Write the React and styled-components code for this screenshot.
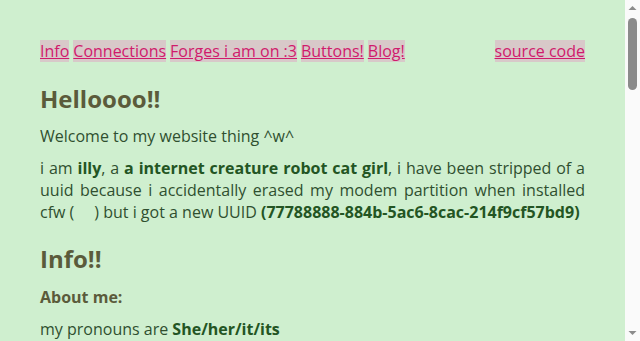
import React from 'react';
import styled, { createGlobalStyle } from 'styled-components';

const Global = createGlobalStyle`
html, body { margin: 0; height: 100%; overflow: hidden; background: #cfefcf; }
body {
  color: #2f4f2f;
  font-family: "Open Sans", "DejaVu Sans", sans-serif;
  font-size: 16px;
}
`

const Window = styled.div`
display: flex;
height: 100vh;
`

const Page = styled.div`
flex: 1;
overflow-y: auto;
box-sizing: border-box;
padding: 40px;
background: #cfefcf;
scrollbar-width: none;
&::-webkit-scrollbar { display: none; }
`

const ScrollBar = styled.div`
width: 15px;
display: flex;
flex-direction: column;
align-items: center;
background: #fafafa;
`

const Arrow = styled.svg`
flex: none;
width: 15px;
height: 15px;
`

const Track = styled.div`
flex: 1;
display: flex;
flex-direction: column;
align-items: center;
padding-top: 3px;
`

const Thumb = styled.div`
width: 9px;
height: 72px;
border-radius: 5px;
background: #8b8b8b;
`

const Main = styled.div`
display: flex;
flex-direction: column;
min-height: 1284px;
`

const Nav = styled.nav`
display: flex;
justify-content: space-between;
margin-bottom: 11px;
line-height: 22px;
`

const NavGroup = styled.div`
display: flex;
gap: 4px;
`

const Link = styled.a`
color: #d01a6c;
background: #d8c9c9;
text-decoration: underline;
cursor: pointer;
`

const Heading = styled.h2`
margin: 9px 0 ${({ $tight }) => ($tight ? '10px' : '11px')};
font-size: 24px;
font-weight: 700;
line-height: 33px;
color: #5b5b3b;
`

const SubHeading = styled.h3`
margin: 0 0 10px;
font-size: 16px;
font-weight: 700;
line-height: 22px;
color: #5b5b3b;
`

const Para = styled.p`
margin: 0 0 10px;
line-height: 22px;
text-align: justify;
`

const B = styled.b`
color: #235523;
font-weight: 700;
`

const Gap = styled.span`
display: inline-block;
width: 20px;
`

const List = styled.ul`
margin: 0 0 10px;
padding-left: 24px;
line-height: 22px;
`

const App = () => {
  return (
    <Window>
      <Global />
      <Page>
        <Main>
          <Nav>
            <NavGroup>
              <Link>Info</Link>
              <Link>Connections</Link>
              <Link>Forges i am on :3</Link>
              <Link>Buttons!</Link>
              <Link>Blog!</Link>
            </NavGroup>
            <Link>source code</Link>
          </Nav>

          <Heading $tight>Helloooo!!</Heading>
          <Para>Welcome to my website thing ^w^</Para>
          <Para>
            i am <B>illy</B>, a <B>a internet creature robot cat girl</B>, i have been stripped of a uuid because i accidentally erased my modem partition when installed cfw (<Gap />) but i got a new UUID <B>(77788888-884b-5ac6-8cac-214f9cf57bd9)</B>
          </Para>

          <Heading>Info!!</Heading>
          <SubHeading>About me:</SubHeading>
          <Para>my pronouns are <B>She/her/it/its</B></Para>
          <Para>i like computers, robots, cats and making silly little things on the internet</Para>
          <List>
            <li>i run linux on everything i can</li>
            <li>i like writing code (badly)</li>
            <li>i listen to way too much music</li>
          </List>

          <Heading>Connections</Heading>
          <Para>you can find me around the web on these places :3</Para>

          <Heading>Forges i am on :3</Heading>
          <Para>places where my code lives</Para>

          <Heading>Buttons!</Heading>
          <Para>feel free to put my button on your site!</Para>

          <Heading>Blog!</Heading>
          <Para>sometimes i write things down here</Para>
        </Main>
      </Page>
      <ScrollBar>
        <Arrow viewBox="0 0 15 15"><path d="M3.5 10 L7.5 6 L11.5 10 Z" fill="#8b8b8b" /></Arrow>
        <Track><Thumb /></Track>
        <Arrow viewBox="0 0 15 15"><path d="M3.5 5 L7.5 9 L11.5 5 Z" fill="#8b8b8b" /></Arrow>
      </ScrollBar>
    </Window>
  );
};

export default App;
